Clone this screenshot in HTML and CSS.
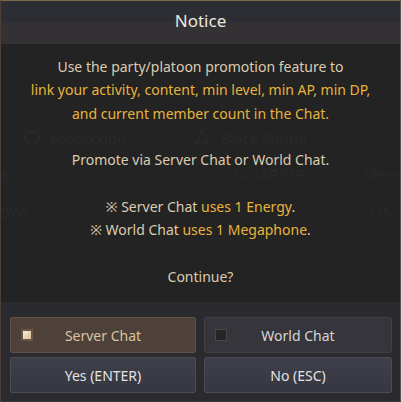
FILE: index.html
```html
<!DOCTYPE html>
<html>
<head>
<meta charset="utf-8">
<link rel="stylesheet" href="styles.css">
</head>
<body>
<div class="scene">
  <div class="under">
    <div class="under-row tabs">
      <span class="ghost-item">
        <svg class="ghost-icon" viewBox="0 0 18 18" width="18" height="18"><circle cx="9" cy="9" r="6.5" fill="none" stroke="#292929" stroke-width="2"/><circle cx="9" cy="2.5" r="2" fill="#292929"/><circle cx="9" cy="15.5" r="2" fill="#292929"/><circle cx="2.5" cy="9" r="2" fill="#292929"/><circle cx="15.5" cy="9" r="2" fill="#292929"/></svg>
        Atoraxxion</span>
      <span class="ghost-item second">
        <svg class="ghost-icon" viewBox="0 0 18 18" width="18" height="18"><path d="M9 3 L3 14 L15 14 Z" fill="none" stroke="#292929" stroke-width="1.5"/><circle cx="9" cy="3" r="2" fill="#292929"/><circle cx="3" cy="14" r="2" fill="#292929"/><circle cx="15" cy="14" r="2" fill="#292929"/></svg>
        Black Shrine</span>
    </div>
    <div class="under-row heads">
      <span class="g-a">ls</span>
      <span class="g-b">Lv./AP/DP</span>
      <span class="g-c">Members</span>
    </div>
    <div class="under-row cells">
      <span class="g-a">OW!</span>
      <span class="g-c">1/5</span>
    </div>
  </div>
  <div class="dialog">
    <div class="header">Notice</div>
    <div class="body">
      <p class="line">Use the party/platoon promotion feature to</p>
      <p class="line gold">link your activity, content, min level, min AP, min DP,</p>
      <p class="line gold">and current member count in the Chat.</p>
      <p class="line blank"></p>
      <p class="line">Promote via Server Chat or World Chat.</p>
      <p class="line blank"></p>
      <p class="line">※ Server Chat <span class="gold">uses 1 Energy</span>.</p>
      <p class="line">※ World Chat <span class="gold">uses 1 Megaphone</span>.</p>
      <p class="line blank"></p>
      <p class="line">Continue?</p>
    </div>
    <div class="footer">
      <div class="btn-grid">
        <div class="btn toggle active"><span class="check"></span><span class="label">Server Chat</span></div>
        <div class="btn toggle"><span class="check"></span><span class="label">World Chat</span></div>
        <div class="btn action">Yes (ENTER)</div>
        <div class="btn action">No (ESC)</div>
      </div>
    </div>
  </div>
</div>
</body>
</html>
```
FILE: styles.css
```css
html, body {
  margin: 0;
  padding: 0;
  background: #222222;
}
body {
  font-family: "Noto Sans", "Open Sans", sans-serif;
}
.scene {
  position: relative;
  width: 401px;
  height: 402px;
  overflow: hidden;
  background: #232323;
}
.under {
  position: absolute;
  inset: 0;
  padding-top: 125px;
  color: #292929;
  font-size: 15px;
}
.under-row {
  display: flex;
  align-items: center;
  position: relative;
  white-space: nowrap;
}
.tabs {
  padding-left: 23px;
  height: 26px;
}
.ghost-item {
  display: flex;
  align-items: center;
  gap: 9px;
  flex-shrink: 0;
}
.ghost-item.second {
  margin-left: 67px;
}
.ghost-icon {
  flex-shrink: 0;
}
.heads {
  border-bottom: 1px solid #262626;
  height: 40px;
  margin-top: 3px;
}
.heads span, .cells span { flex-shrink: 0; }
.g-a { width: 237px; margin-left: -2px; }
.g-b { width: 128px; }
.cells { height: 34px; }
.cells .g-a { width: 370px; }
.dialog {
  position: absolute;
  inset: 0;
  display: flex;
  flex-direction: column;
  border-top: 1px solid #7b6844;
  border-left: 1px solid #4d4038;
  border-right: 1px solid #55555a;
  border-bottom: 1px solid #3a3a40;
}
.header {
  height: 43px;
  background: linear-gradient(#2c2e33 0, #2c2e33 21px, #333134 22px, #333134 100%);
  color: #ebe6de;
  font-size: 17px;
  text-align: center;
  line-height: 40px;
}
.body {
  height: 258px;
  padding-top: 11px;
  box-sizing: border-box;
}
.line {
  margin: 0;
  height: 23.3px;
  line-height: 23.3px;
  text-align: center;
  font-size: 14px;
  color: #dccbb0;
  white-space: nowrap;
}
.gold { color: #e8b43c; }
.footer {
  flex: 1;
  background: #2a2a2f;
  padding: 15px 8px 0 9px;
}
.btn-grid {
  display: grid;
  grid-template-columns: 186px 188px;
  column-gap: 8px;
  row-gap: 4px;
}
.btn {
  height: 36px;
  box-sizing: border-box;
  border-radius: 2px;
  display: flex;
  align-items: center;
  justify-content: center;
  font-size: 14px;
  position: relative;
}
.toggle {
  background: #35353b;
  border: 1px solid #404047;
  color: #d6d6d6;
}
.toggle.active {
  background: #4d4139;
  border: 1px solid #5f5146;
  color: #dcc3a2;
}
.check {
  position: absolute;
  left: 10px;
  top: 11px;
  width: 12px;
  height: 12px;
  box-sizing: border-box;
  background: #262626;
  border: 1px solid #484848;
}
.active .check {
  border: 2px solid #6e5443;
  background: linear-gradient(135deg, #fbeedd, #d9bd98);
}
.action {
  background: linear-gradient(#3e3f48, #363740);
  border: 1px solid #4a4b55;
  color: #e3e3e3;
}
```
